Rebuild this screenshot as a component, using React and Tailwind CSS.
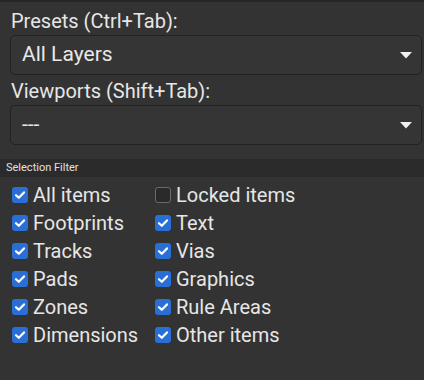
import React from "react";

function Check({ checked }) {
  if (!checked) {
    return (
      <span className="w-[16px] h-[16px] rounded-[3px] border border-[#6a6a6a] bg-[#2a2a2a] shrink-0" />
    );
  }
  return (
    <span className="w-[16px] h-[16px] rounded-[3px] bg-[#2a6fd6] shrink-0 flex items-center justify-center">
      <svg width="12" height="12" viewBox="0 0 12 12">
        <path d="M2 6.2 L4.8 8.8 L10 3.4" fill="none" stroke="#fff" strokeWidth="2.2" strokeLinecap="round" strokeLinejoin="round" />
      </svg>
    </span>
  );
}

function Item({ label, checked = true }) {
  return (
    <div className="flex items-center gap-[5px] h-[28px]">
      <Check checked={checked} />
      <span className="text-[20px] text-[#e6e6e6] leading-none">{label}</span>
    </div>
  );
}

function Dropdown({ value }) {
  return (
    <div className="mr-[2px] h-[40px] rounded-[5px] border border-[#222] bg-[#353535] flex items-center justify-between pl-[11px] pr-[9px]">
      <span className="text-[21px] text-[#e8e8e8]">{value}</span>
      <svg width="12" height="7" viewBox="0 0 12 7">
        <path d="M0 0 L12 0 L6 6.5 Z" fill="#f0f0f0" />
      </svg>
    </div>
  );
}

export default function App() {
  return (
    <div
      className="w-[424px] h-[380px] bg-[#333333] border-t-2 border-[#262626] overflow-hidden"
      style={{ fontFamily: "Roboto, 'Noto Sans', sans-serif" }}
    >
      <div className="pl-[10px] pt-[8px]">
        <div className="text-[20px] text-[#e6e6e6] pl-[1px] leading-[22px] mb-[3px]">Presets (Ctrl+Tab):</div>
        <Dropdown value="All Layers" />
        <div className="text-[20px] text-[#e6e6e6] pl-[1px] leading-[22px] mt-[5px] mb-[3px]">Viewports (Shift+Tab):</div>
        <Dropdown value="---" />
      </div>
      <div className="mt-[14px] h-[18px] bg-[#2b2b2b] flex items-center pl-[6px]">
        <span className="text-[11px] text-[#e0e0e0]">Selection Filter</span>
      </div>
      <div className="pl-[12px] pt-[4px] grid grid-cols-[143px_1fr]">
        <Item label="All items" />
        <Item label="Locked items" checked={false} />
        <Item label="Footprints" />
        <Item label="Text" />
        <Item label="Tracks" />
        <Item label="Vias" />
        <Item label="Pads" />
        <Item label="Graphics" />
        <Item label="Zones" />
        <Item label="Rule Areas" />
        <Item label="Dimensions" />
        <Item label="Other items" />
      </div>
    </div>
  );
}
